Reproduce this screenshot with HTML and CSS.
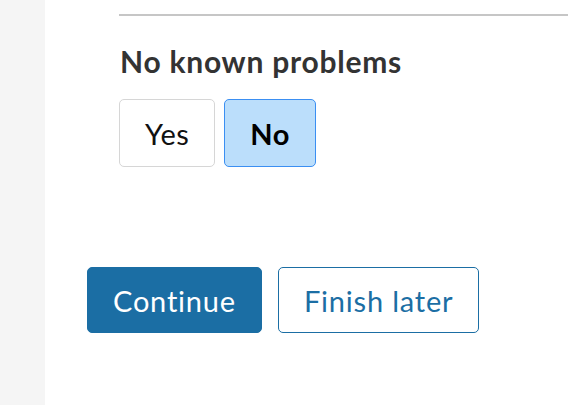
FILE: index.html
```html
<!DOCTYPE html>
<html lang="en">
<head>
<meta charset="utf-8">
<title>No known problems</title>
<link rel="stylesheet" href="styles.css">
</head>
<body>
<div class="layout">
  <aside class="sidebar"></aside>
  <main class="main">
    <section class="question">
      <hr class="divider">
      <h2 class="question-title">No known problems</h2>
      <div class="choices">
        <button class="choice" type="button">Yes</button>
        <button class="choice choice-selected" type="button">No</button>
      </div>
    </section>
    <div class="actions">
      <button class="btn btn-primary" type="button">Continue</button>
      <button class="btn btn-secondary" type="button">Finish later</button>
    </div>
  </main>
</div>
</body>
</html>
```

FILE: styles.css
```css
html, body {
  margin: 0;
  padding: 0;
  background: #ffffff;
  font-family: "Lato", "Liberation Sans", sans-serif;
}

.layout {
  display: flex;
  min-height: 405px;
}

.sidebar {
  width: 45px;
  flex: none;
  background: #f5f5f5;
}

.main {
  flex: 1;
  background: #ffffff;
}

.question {
  padding: 14px 0 0 74px;
}

.divider {
  margin: 0;
  border: 0;
  height: 2px;
  background: #c6c6c6;
}

.question-title {
  margin: 27px 0 0 1px;
  font-size: 30px;
  line-height: 36px;
  font-weight: 700;
  letter-spacing: 0.75px;
  color: #333333;
}

.choices {
  display: flex;
  gap: 9px;
  margin-top: 20px;
}

.choice {
  height: 68px;
  padding: 0 25px;
  font-family: inherit;
  font-size: 29px;
  letter-spacing: 0.5px;
  color: #111111;
  background: #ffffff;
  border: 1.5px solid #d6d6d6;
  border-radius: 5px;
}

.choice-selected {
  background: #bbdefb;
  border-color: #3b8ff2;
  color: #000000;
  font-weight: 700;
}

.actions {
  display: flex;
  gap: 16px;
  padding: 100px 0 0 42px;
}

.btn {
  height: 66px;
  padding: 0 25px;
  font-family: inherit;
  font-size: 29px;
  letter-spacing: 0.8px;
  border-radius: 5px;
}

.btn-primary {
  background: #1b6ea4;
  border: 1.5px solid #1b6ea4;
  color: #ffffff;
}

.btn-secondary {
  background: #ffffff;
  border: 1.5px solid #1b6ea4;
  color: #1b6ea4;
}
```
